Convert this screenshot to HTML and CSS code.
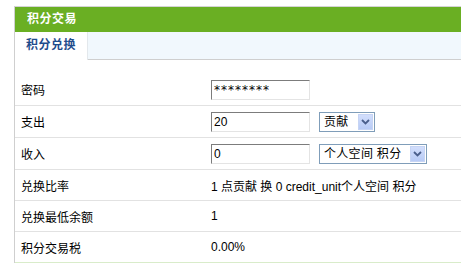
FILE: index.html
```html
<!DOCTYPE html>
<html lang="zh-CN">
<head>
<meta charset="utf-8">
<title>积分交易</title>
<link rel="stylesheet" href="styles.css">
</head>
<body>
<div class="box">
  <div class="title">积分交易</div>
  <div class="tabs"><span class="tab">积分兑换</span></div>
  <div class="content">
    <div class="row row-input">
      <div class="label">密码</div>
      <div class="value"><input class="field field-pass" type="text" value="********"></div>
    </div>
    <div class="row row-input">
      <div class="label">支出</div>
      <div class="value">
        <input class="field" type="text" value="20">
        <span class="select"><span class="select-text">贡献</span><span class="select-btn"><svg width="9" height="6" viewBox="0 0 9 6"><path d="M1 1 L4.5 4.5 L8 1" fill="none" stroke="#4a5f8c" stroke-width="1.8"/></svg></span></span>
      </div>
    </div>
    <div class="row row-input">
      <div class="label">收入</div>
      <div class="value">
        <input class="field" type="text" value="0">
        <span class="select"><span class="select-text">个人空间 积分</span><span class="select-btn"><svg width="9" height="6" viewBox="0 0 9 6"><path d="M1 1 L4.5 4.5 L8 1" fill="none" stroke="#4a5f8c" stroke-width="1.8"/></svg></span></span>
      </div>
    </div>
    <div class="row">
      <div class="label">兑换比率</div>
      <div class="value">1 点贡献 换 0 credit_unit个人空间 积分</div>
    </div>
    <div class="row">
      <div class="label">兑换最低余额</div>
      <div class="value">1</div>
    </div>
    <div class="row row-last">
      <div class="label">积分交易税</div>
      <div class="value">0.00%</div>
    </div>
  </div>
</div>
</body>
</html>
```
FILE: styles.css
```css
html, body {
  margin: 0;
  padding: 0;
  background: #ffffff;
}
body {
  font-family: "Liberation Sans", "Noto Sans CJK SC", sans-serif;
  font-size: 12px;
  color: #000;
}
.box {
  margin: 6px 0 0 14px;
  border-top: 1px solid #d4d4d4;
  border-left: 1px solid #cfcfcf;
}
.title {
  background: #6aaf23;
  height: 25px;
  line-height: 25px;
  padding-left: 12px;
  color: #ffffff;
  font-weight: bold;
  letter-spacing: 0.5px;
}
.tabs {
  background: #f1f8fd;
  height: 27px;
  border-bottom: 1px solid #cfcfcf;
  display: flex;
}
.tab {
  background: #ffffff;
  width: 73px;
  padding-left: 11px;
  box-sizing: border-box;
  line-height: 27px;
  height: 28px;
  font-weight: bold;
  color: #1f4c8c;
  letter-spacing: 0.5px;
  border-right: 1px solid #e3e8ec;
}
.content {
  padding-top: 14px;
}
.row {
  display: grid;
  grid-template-columns: 190px 1fr;
  align-items: center;
  height: 31px;
  box-sizing: border-box;
  border-bottom: 1px solid #e2e2e2;
  padding-left: 6px;
}
.row-input {
  height: 32px;
}
.row-last {
  border-bottom-color: #d9ecca;
}
.value {
  display: flex;
  align-items: center;
  gap: 9px;
}
.field {
  width: 99px;
  height: 20px;
  box-sizing: border-box;
  margin: 0;
  padding: 0 2px;
  border-style: solid;
  border-width: 1px;
  border-color: #7c7c7c #e4e4e4 #e4e4e4 #7c7c7c;
  font-family: "Liberation Sans", "Noto Sans CJK SC", sans-serif;
  font-size: 12px;
  color: #000;
  background: #fff;
  outline: none;
}
.field-pass {
  font-family: "DejaVu Sans", sans-serif;
  font-size: 12px;
  letter-spacing: 1px;
}
.select {
  display: inline-flex;
  align-items: center;
  height: 20px;
  box-sizing: border-box;
  border: 1px solid #7f9db9;
  background: #fff;
  padding: 0 1px 0 4px;
}
.select-text {
  margin-right: 9px;
  line-height: 18px;
  letter-spacing: 0.3px;
}
.select-btn {
  width: 15px;
  height: 16px;
  box-sizing: border-box;
  background: linear-gradient(#d2defc, #b8cbf6);
  border: 1px solid #c6d4f4;
  display: inline-flex;
  align-items: center;
  justify-content: center;
}
.select-btn svg {
  display: block;
}
```
